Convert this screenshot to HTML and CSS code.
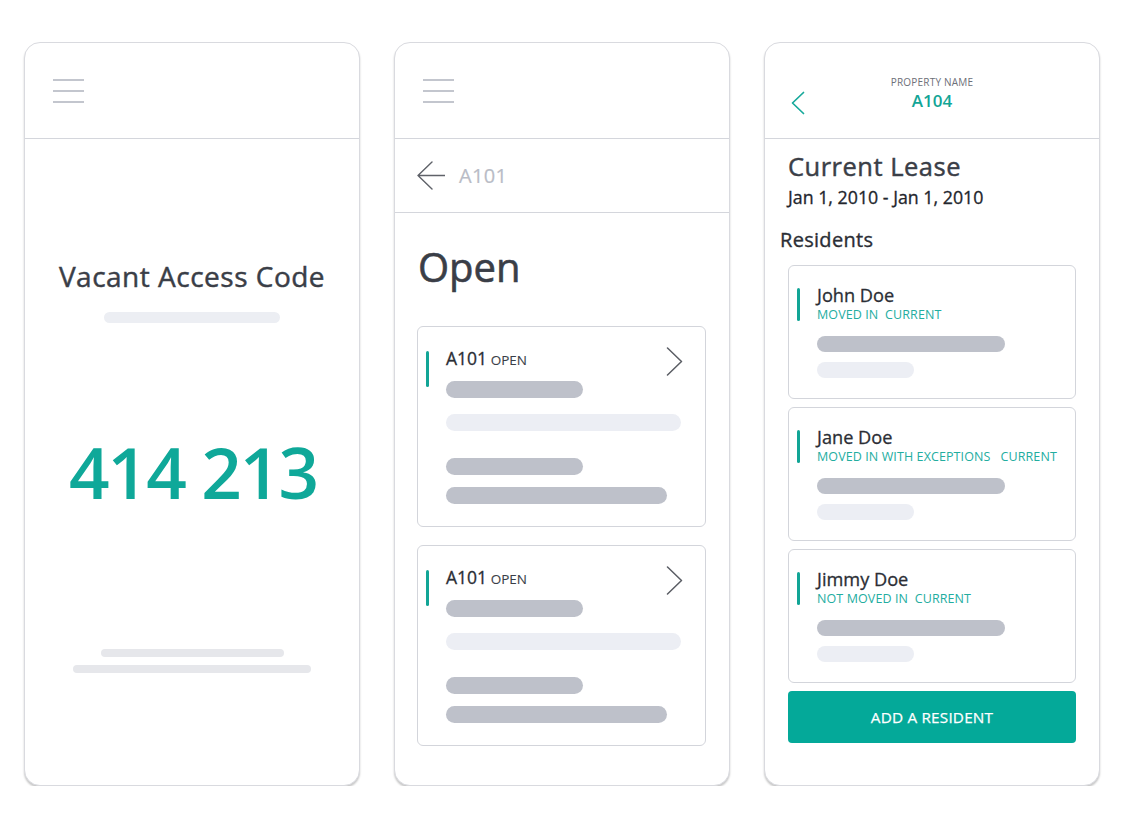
FILE: index.html
```html
<!DOCTYPE html>
<html lang="en">
<head>
<meta charset="utf-8">
<title>Screens</title>
<link rel="stylesheet" href="styles.css">
</head>
<body>
<div class="stage">
  <section class="phone">
    <header class="bar-head">
      <div class="burger"><span></span><span></span><span></span></div>
    </header>
    <div class="vac">
      <h1 class="vac-title">Vacant Access Code</h1>
      <div class="pill pill-vac1"></div>
      <div class="code">414 213</div>
      <div class="pill pill-vac2"></div>
      <div class="pill pill-vac3"></div>
    </div>
  </section>

  <section class="phone">
    <header class="bar-head">
      <div class="burger"><span></span><span></span><span></span></div>
    </header>
    <div class="backrow">
      <svg class="arrow" width="28" height="30" viewBox="0 0 28 30"><path d="M15 1 L1 14.5 L15 28 M1 14.5 H28" fill="none" stroke="#5f6269" stroke-width="1.4" stroke-linecap="round" stroke-linejoin="round"/></svg>
      <span class="backlabel">A101</span>
    </div>
    <div class="openlist">
      <h1 class="open-title">Open</h1>
      <div class="unit">
        <div class="accent"></div>
        <div class="unit-body">
          <div class="unit-top">
            <div class="unit-name">A101 <small>OPEN</small></div>
            <svg class="chev" width="17" height="29" viewBox="0 0 17 29"><path d="M1.5 1 L15.5 14.5 L1.5 28" fill="none" stroke="#5a5d64" stroke-width="1.5" stroke-linecap="round" stroke-linejoin="round"/></svg>
          </div>
          <div class="pill dark w137 mt11"></div>
          <div class="pill light w235 mt16"></div>
          <div class="pill dark w137 mt27"></div>
          <div class="pill dark w221 mt12"></div>
        </div>
      </div>
      <div class="unit">
        <div class="accent"></div>
        <div class="unit-body">
          <div class="unit-top">
            <div class="unit-name">A101 <small>OPEN</small></div>
            <svg class="chev" width="17" height="29" viewBox="0 0 17 29"><path d="M1.5 1 L15.5 14.5 L1.5 28" fill="none" stroke="#5a5d64" stroke-width="1.5" stroke-linecap="round" stroke-linejoin="round"/></svg>
          </div>
          <div class="pill dark w137 mt11"></div>
          <div class="pill light w235 mt16"></div>
          <div class="pill dark w137 mt27"></div>
          <div class="pill dark w221 mt12"></div>
        </div>
      </div>
    </div>
  </section>

  <section class="phone">
    <header class="prop-head">
      <svg class="tchev" width="14" height="24" viewBox="0 0 14 24"><path d="M12.5 1.5 L1.5 12 L12.5 22.5" fill="none" stroke="#17a99b" stroke-width="1.7" stroke-linecap="round" stroke-linejoin="round"/></svg>
      <div class="prop-center">
        <div class="prop-label">PROPERTY NAME</div>
        <div class="prop-unit">A104</div>
      </div>
      <div></div>
    </header>
    <div class="lease">
      <h1 class="lease-title">Current Lease</h1>
      <div class="lease-dates">Jan 1, 2010 - Jan 1, 2010</div>
      <h2 class="res-title">Residents</h2>
      <div class="res-list">
        <div class="res">
          <div class="accent small"></div>
          <div class="res-body">
            <div class="res-name">John Doe</div>
            <div class="res-status">MOVED IN&nbsp; CURRENT</div>
            <div class="pill dark w188 mt13 h16"></div>
            <div class="pill light w97 mt10 h16"></div>
          </div>
        </div>
        <div class="res">
          <div class="accent small"></div>
          <div class="res-body">
            <div class="res-name">Jane Doe</div>
            <div class="res-status">MOVED IN WITH EXCEPTIONS&nbsp;&nbsp; CURRENT</div>
            <div class="pill dark w188 mt13 h16"></div>
            <div class="pill light w97 mt10 h16"></div>
          </div>
        </div>
        <div class="res">
          <div class="accent small"></div>
          <div class="res-body">
            <div class="res-name">Jimmy Doe</div>
            <div class="res-status">NOT MOVED IN&nbsp; CURRENT</div>
            <div class="pill dark w188 mt13 h16"></div>
            <div class="pill light w97 mt10 h16"></div>
          </div>
        </div>
        <button class="add">ADD A RESIDENT</button>
      </div>
    </div>
  </section>
</div>
</body>
</html>
```
FILE: styles.css
```css
* { box-sizing: border-box; }
html, body { margin: 0; padding: 0; background: #ffffff; }
body { font-family: "Open Sans", "Noto Sans", sans-serif; color: #3a3e47; }
h1, h2 { margin: 0; font-weight: 400; }

.stage {
  display: flex;
  gap: 34px;
  padding: 42px 24px 0 24px;
}

.phone {
  width: 336px;
  height: 744px;
  border: 1px solid #d9dadf;
  border-radius: 16px;
  background: #fff;
  box-shadow: 0 2px 2px rgba(0, 0, 0, 0.22);
  display: flex;
  flex-direction: column;
  overflow: hidden;
}

.bar-head {
  height: 96px;
  flex: none;
  border-bottom: 1px solid #d4d6dc;
  display: flex;
  align-items: center;
  padding-left: 28px;
}
.burger { display: flex; flex-direction: column; gap: 9.5px; padding-top: 1px; }
.burger span { display: block; width: 31px; height: 1.5px; background: #c3c6ce; }

/* panel 1 */
.vac { display: flex; flex-direction: column; align-items: center; }
.vac-title {
  margin-top: 118px;
  font-size: 28px;
  line-height: 38px;
  color: #3a3e47;
  letter-spacing: 0.5px;
  -webkit-text-stroke: 0.45px #3a3e47;
}
.pill { border-radius: 9px; flex: none; }
.pill-vac1 { width: 176px; height: 11px; background: #eceef3; margin-top: 17px; }
.code {
  margin-top: 113px;
  font-size: 71px;
  line-height: 71px;
  font-weight: 600;
  color: #0fa899;
  letter-spacing: -2px;
  padding-left: 2px;
}
.pill-vac2 { width: 183px; height: 8px; background: #e6e7eb; margin-top: 142px; }
.pill-vac3 { width: 238px; height: 8px; background: #e6e7eb; margin-top: 8px; }

/* panel 2 */
.backrow {
  height: 74px;
  flex: none;
  border-bottom: 1px solid #d4d6dc;
  display: flex;
  align-items: center;
  padding-left: 22px;
  gap: 14px;
}
.arrow { display: block; margin-top: 1px; }
.backlabel { font-size: 20px; color: #b9bcc6; letter-spacing: 0.3px; -webkit-text-stroke: 0.2px #b9bcc6; }

.openlist { padding: 27px 23px 0 22px; display: flex; flex-direction: column; }
.open-title {
  font-size: 40px;
  line-height: 54px;
  color: #3a3e47;
  margin-left: 1px;
  margin-bottom: 32px;
  -webkit-text-stroke: 0.6px #3a3e47;
}

.unit {
  border: 1px solid #d3d5db;
  border-radius: 6px;
  display: flex;
  gap: 17px;
  padding: 19px 24px 22px 8px;
  margin-bottom: 18px;
}
.accent { width: 3px; height: 36px; background: #12a596; border-radius: 2px; margin-top: 5px; flex: none; }
.accent.small { height: 33px; }
.unit-body { flex: 1; display: flex; flex-direction: column; }
.unit-top { height: 24px; display: flex; justify-content: space-between; align-items: flex-start; }
.unit-name { font-size: 17.5px; line-height: 24px; color: #2b2e35; -webkit-text-stroke: 0.3px #2b2e35; }
.unit-name small { font-size: 13.5px; color: #3a3e47; margin-left: -1px; -webkit-text-stroke: 0.1px #3a3e47; }
.chev { display: block; margin-top: 1px; margin-right: -2px; }

.dark { background: #bec1ca; height: 17px; }
.light { background: #eceef4; height: 17px; }
.h16 { height: 16px; }
.w137 { width: 137px; }
.w235 { width: 235px; }
.w221 { width: 221px; }
.w188 { width: 188px; }
.w97 { width: 97px; }
.mt10 { margin-top: 10px; }
.mt11 { margin-top: 11px; }
.mt12 { margin-top: 12px; }
.mt13 { margin-top: 13px; }
.mt16 { margin-top: 16px; }
.mt27 { margin-top: 27px; }

/* panel 3 */
.prop-head {
  height: 96px;
  flex: none;
  border-bottom: 1px solid #d4d6dc;
  display: grid;
  grid-template-columns: 1fr auto 1fr;
  align-items: start;
  padding-top: 32px;
}
.tchev { display: block; margin-left: 26px; margin-top: 16px; }
.prop-center { text-align: center; }
.prop-label { font-size: 10px; line-height: 14px; color: #6d7079; letter-spacing: 0.2px; }
.prop-unit { font-size: 17px; line-height: 22px; font-weight: 600; color: #12a596; margin-top: 1px; }

.lease { padding: 10px 23px 0 23px; display: flex; flex-direction: column; }
.lease-title {
  font-size: 25.5px;
  line-height: 34px;
  color: #3a3e47;
  letter-spacing: 0.5px;
  -webkit-text-stroke: 0.45px #3a3e47;
}
.lease-dates { font-size: 17.8px; line-height: 24px; color: #23262d; margin-top: 2px; -webkit-text-stroke: 0.3px #23262d; }
.res-title { font-size: 20px; line-height: 26px; color: #2b2e35; margin-top: 18px; margin-left: -8px; letter-spacing: 0.3px; -webkit-text-stroke: 0.35px #2b2e35; }
.res-list { display: flex; flex-direction: column; gap: 8px; margin-top: 12px; }

.res {
  height: 134px;
  border: 1px solid #d3d5db;
  border-radius: 6px;
  display: flex;
  gap: 17px;
  padding: 17px 8px 0 8px;
}
.res-body { display: flex; flex-direction: column; }
.res-name { font-size: 18.2px; line-height: 24px; color: #2b2e35; -webkit-text-stroke: 0.3px #2b2e35; }
.res-status { font-size: 12.5px; line-height: 16px; color: #23ad9f; letter-spacing: 0.1px; }

.add {
  height: 52px;
  border: none;
  border-radius: 4px;
  background: #04a999;
  color: #ffffff;
  font-family: "Open Sans", "Noto Sans", sans-serif;
  font-size: 15.3px;
  letter-spacing: 0.2px;
  padding: 0;
  -webkit-text-stroke: 0.25px #ffffff;
}
```
